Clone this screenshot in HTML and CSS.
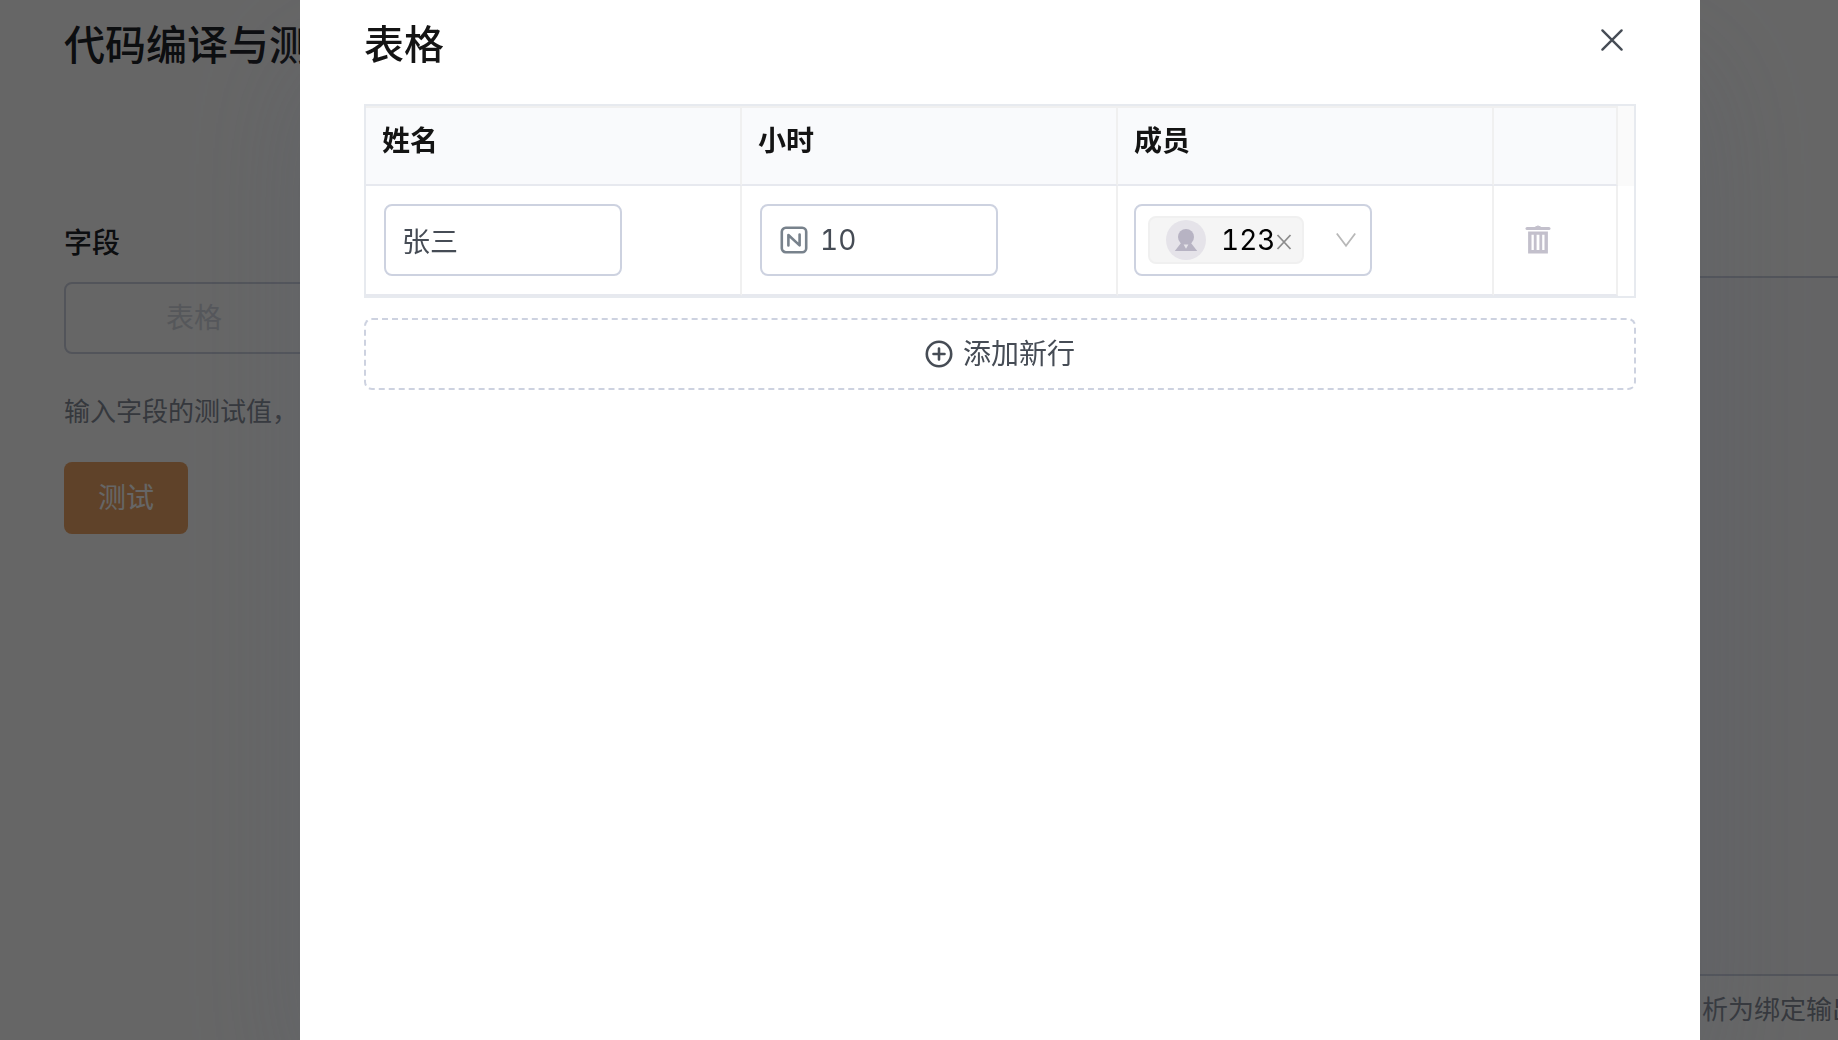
FILE: index.html
```html
<!DOCTYPE html>
<html lang="zh-CN">
<head>
    <meta charset="UTF-8">
    <meta name="viewport" content="width=device-width, initial-scale=1.0">
    <title>代码编译与测试</title>
    <link rel="stylesheet" href="styles.css">
</head>
<body>

    <!-- Page behind the dialog -->
    <main class="page">
        <section class="test-form">
            <h1>代码编译与测试</h1>
            <h2>字段</h2>
            <button type="button" class="field-button">表格</button>
            <p class="hint">输入字段的测试值，</p>
            <button type="button" class="test-button">测试</button>
        </section>
        <section class="output">
            <div class="output-box"></div>
            <p class="hint">析为绑定输出</p>
        </section>
    </main>

    <!-- Dialog -->
    <div class="overlay">
        <div class="modal" role="dialog" aria-modal="true" aria-labelledby="modal-title">
            <header class="modal-header">
                <h2 id="modal-title">表格</h2>
                <button type="button" class="icon-button close" aria-label="关闭">
                    <svg width="24" height="24" viewBox="0 0 24 24" fill="none" stroke="currentColor" stroke-width="2.4" stroke-linecap="round">
                        <path d="M2.4 2.4l19.2 19.2M21.6 2.4L2.4 21.6"/>
                    </svg>
                </button>
            </header>

            <div class="table-box">
                <table>
                    <colgroup>
                        <col>
                        <col>
                        <col>
                        <col class="col-action">
                        <col class="col-gutter">
                    </colgroup>
                    <thead>
                        <tr>
                            <th scope="col" id="col-name">姓名</th>
                            <th scope="col" id="col-hours">小时</th>
                            <th scope="col" id="col-member">成员</th>
                            <th></th>
                            <th class="gutter"></th>
                        </tr>
                    </thead>
                    <tbody>
                        <tr>
                            <td><input type="text" class="control" value="张三" aria-labelledby="col-name"></td>
                            <td>
                                <div class="control number">
                                    <svg width="28" height="28" viewBox="0 0 28 28" fill="none" stroke="#78828c" stroke-width="2.6" stroke-linecap="round" stroke-linejoin="round">
                                        <rect x="1.8" y="1.8" width="24.4" height="24.4" rx="4"/>
                                        <path d="M8.4 19.4V9l11.2 10.4V8.6"/>
                                    </svg>
                                    <input type="text" inputmode="numeric" value="10" aria-labelledby="col-hours">
                                </div>
                            </td>
                            <td class="member-cell">
                                <div class="control member">
                                    <div class="tag">
                                        <svg width="40" height="40" viewBox="0 0 40 40">
                                            <circle cx="20" cy="20" r="20" fill="#e5e3e9"/>
                                            <circle cx="20" cy="17" r="8" fill="#b7b3c3"/>
                                            <path d="M15 23L8.800 31h22.400L25 23z" fill="#b7b3c3"/>
                                            <path d="M17.6 24.6h4.800L20 28.800z" fill="#e5e3e9"/>
                                        </svg>
                                    </div>
                                    <select aria-labelledby="col-member">
                                        <option>123</option>
                                    </select>
                                    <button type="button" class="icon-button remove" aria-label="移除 123">
                                        <svg width="16" height="16" viewBox="0 0 16 16" fill="none" stroke="currentColor" stroke-width="1.8">
                                            <path d="M1.5 1l13 14M14.5 1l-13 14"/>
                                        </svg>
                                    </button>
                                    <svg class="arrow" width="20" height="16" viewBox="0 0 20 16" fill="none" stroke="#b8b8b8" stroke-width="1.8">
                                        <path d="M.8 1.5L10 13.8 19.2 1.5"/>
                                    </svg>
                                </div>
                            </td>
                            <td class="action-cell">
                                <button type="button" class="icon-button delete" aria-label="删除">
                                    <svg width="26" height="30" viewBox="0 0 26 30" fill="none" stroke="currentColor">
                                        <path d="M2 3.6h22" stroke-width="3" stroke-linecap="round"/>
                                        <path d="M9.800 2.4q3.200-3 6.4 0z" fill="currentColor"/>
                                        <path d="M4.800 8.1h16.4v18.6H4.800z" stroke-width="3.4"/>
                                        <path d="M10.200 8v18M15.800 8v18" stroke-width="2.8"/>
                                    </svg>
                                </button>
                            </td>
                            <td class="gutter"></td>
                        </tr>
                    </tbody>
                </table>
            </div>

            <button type="button" class="add-row">
                <svg width="28" height="28" viewBox="0 0 28 28" fill="none" stroke="currentColor" stroke-width="2.6" stroke-linecap="round">
                    <circle cx="14" cy="14" r="12.2"/>
                    <path d="M14 8.5v11M8.5 14h11"/>
                </svg>
                添加新行
            </button>
        </div>
    </div>

</body>
</html>
```

FILE: styles.css
```css
/* General styling */
* {
    box-sizing: border-box;
}

body {
    margin: 0;
    background-color: #fff;
    color: #1f2329;
    font-family: Inter, "Noto Sans CJK SC", sans-serif;
    font-size: 28px;
    line-height: 40px;
    overflow: hidden;
}

h1,
h2,
p {
    margin: 0;
}

button,
input,
select {
    font: inherit;
    font-feature-settings: "tnum";
}

/* Page behind the dialog */
.page {
    display: flex;
    justify-content: space-between;
    min-height: 100vh;
}

.test-form {
    width: 324px;
    padding: 16px 0 0 64px;
    white-space: nowrap;
}

h1 {
    font-size: 41px;
    font-weight: 500;
    line-height: 58px;
}

.test-form h2 {
    margin: 149px 0 19px;
    font-size: 28px;
    font-weight: 500;
}

.field-button {
    display: block;
    width: 100%;
    height: 72px;
    border: 2px solid #cdd2e0;
    border-radius: 8px;
    background: none;
    color: #d5d9e2;
}

.hint {
    color: #868c98;
    font-size: 26px;
    white-space: nowrap;
}

.test-form .hint {
    margin: 38px 0 30px;
}

.test-button {
    height: 72px;
    padding: 0 34px;
    border: 0;
    border-radius: 8px;
    background-color: #eea566;
    color: #fff;
}

.output {
    display: flex;
    flex-direction: column;
    width: 138px;
    height: 100vh;
    padding-top: 276px;
}

.output-box {
    flex: 1;
    border: solid #cdd2e0;
    border-width: 2px 0;
    background-color: #f9fafc;
}

.output .hint {
    padding: 14px 0 10px 2px;
}

/* Dialog */
.overlay {
    position: fixed;
    inset: 0;
    padding: 0 138px 0 300px;
    background-color: rgba(0, 0, 0, 0.6);
}

.modal {
    height: 100%;
    padding: 0 64px;
    background-color: #fff;
    box-shadow: 0 60px 120px rgba(84, 90, 108, 0.24);
}

.modal-header {
    display: flex;
    justify-content: space-between;
    align-items: flex-start;
    padding: 16px 0 30px;
}

.modal-header h2 {
    color: #141414;
    font-size: 40px;
    font-weight: 500;
    line-height: 58px;
}

.icon-button {
    display: flex;
    align-items: center;
    justify-content: center;
    width: 48px;
    height: 48px;
    padding: 0;
    border: 0;
    background: none;
    cursor: pointer;
}

.close {
    color: #464c55;
}

/* Table */
.table-box {
    border: 2px solid #e7eaef;
}

table {
    width: 100%;
    table-layout: fixed;
    border-spacing: 0;
}

.col-action {
    width: 124px;
}

.col-gutter {
    width: 16px;
}

th {
    height: 80px;
    padding: 13px 16px;
    border: 2px solid #f0f0f0;
    border-left: 0;
    border-bottom-color: #e7e9ef;
    background-color: #f9fafc;
    color: #141414;
    font-weight: 600;
    text-align: left;
    vertical-align: top;
}

td {
    padding: 18px;
    border-right: 2px solid #f0f0f0;
    border-bottom: 2px solid #e7e9ef;
}

th.gutter,
td.gutter {
    padding: 0;
    border: 0;
}

th.gutter {
    background-color: #fafafa;
}

td.member-cell {
    padding-left: 16px;
}

/* Form controls */
.control {
    display: block;
    width: 238px;
    max-width: 100%;
    height: 72px;
    padding: 0 16px;
    border: 2px solid #cdd2e0;
    border-radius: 8px;
    background-color: #fff;
    color: #464c55;
}

.number {
    display: flex;
    align-items: center;
    gap: 12px;
    padding: 0 18px;
}

.number svg {
    flex: none;
}

.number input {
    width: 100%;
    min-width: 0;
    padding: 0;
    border: 0;
    outline: 0;
    background: none;
    color: inherit;
}

.member {
    display: grid;
    align-items: center;
    padding: 0;
}

/* The tag, the select and its icons share one cell */
.member > * {
    grid-area: 1 / 1;
}

.tag {
    display: flex;
    align-items: center;
    width: 156px;
    height: 48px;
    margin-left: 12px;
    padding-left: 16px;
    border: 2px solid #f0f0f0;
    border-radius: 8px;
    background-color: #f5f5f5;
}

.member select {
    width: 100%;
    height: 68px;
    padding: 0 0 0 85px;
    border: 0;
    outline: 0;
    appearance: none;
    background: none;
    color: #000;
}

.remove {
    width: 16px;
    margin-left: 140px;
    padding-top: 4px;
    color: #8c8c8c;
}

.arrow {
    justify-self: end;
    margin-right: 14px;
    pointer-events: none;
}

.action-cell {
    padding: 0 18px;
}

.delete {
    width: 52px;
    color: #c3c0cc;
}

/* Add row */
.add-row {
    display: flex;
    align-items: center;
    justify-content: center;
    gap: 10px;
    width: 100%;
    height: 72px;
    margin-top: 20px;
    border: 2px dashed #cdd2e0;
    border-radius: 8px;
    background: none;
    color: #464c55;
    cursor: pointer;
}
```
